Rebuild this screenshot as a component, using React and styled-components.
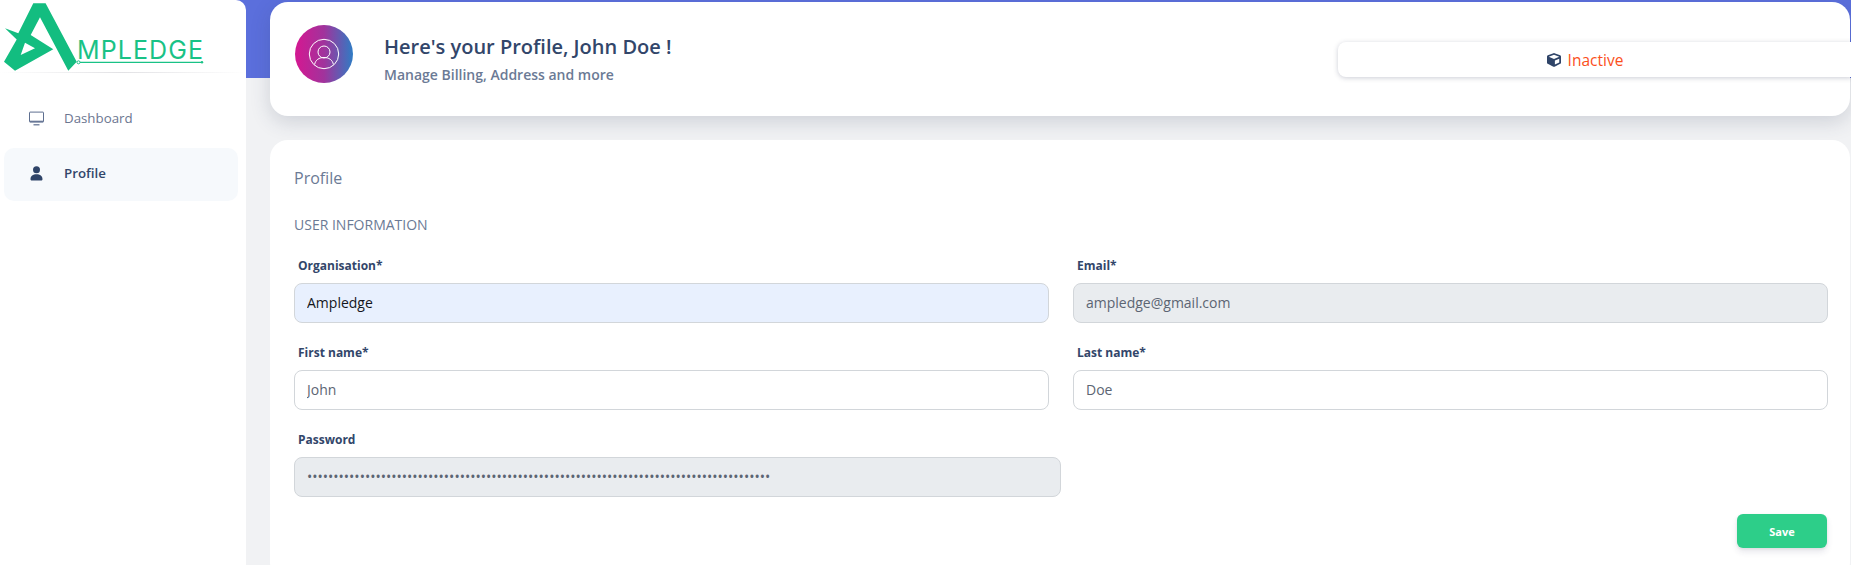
import React from "react";
import styled, { createGlobalStyle } from "styled-components";
import { FaCube } from "react-icons/fa";

const GlobalStyle = createGlobalStyle`
  * {
    box-sizing: border-box;
  }

  html,
  body {
    margin: 0;
    height: 100%;
    overflow: hidden;
    background: #f1f2f4;
    font-family: "Open Sans", "Liberation Sans", sans-serif;
  }
`;

const Logo = () => (
  <LogoSvg viewBox="0 0 205 72" aria-label="Ampledge">
    <path
      fillRule="evenodd"
      fill="#13bd80"
      d="M33.300 3.300H45.600L76.700 61.700 68.300 70.700 40 17.300 30.700 35 53.300 49.300 15 70.700 4 61.700 16.700 39.500 5 28.300 18.300 33.300ZM20.700 55 35 48.300 25 42.700Z"
    />
    <LogoText x="77" y="59" textLength="126" lengthAdjust="spacing">
      MPLEDGE
    </LogoText>
    <path d="M79 62.300H202" stroke="#19c286" strokeWidth="1.200" />
    <circle cx="78.500" cy="62.300" r="1.500" fill="#fff" stroke="#19c286" />
    <circle cx="202" cy="62.300" r="1.200" fill="#19c286" />
  </LogoSvg>
);

const MonitorIcon = () => (
  <NavSvg viewBox="0 0 15 14">
    <path
      d="M1 .6h13a.5.5 0 0 1 .5.5v9a.5.5 0 0 1-.5.5H1a.5.5 0 0 1-.5-.5v-9a.5.5 0 0 1 .5-.5Z"
      fill="none"
      stroke="#5e6f90"
      strokeWidth="1"
    />
    <path d="M1 9.800h13" stroke="#5e6f90" strokeWidth="1.200" />
    <path d="M4.500 13.300h6" stroke="#5e6f90" strokeWidth="1.200" />
  </NavSvg>
);

const UserIcon = () => (
  <NavSvg viewBox="0 0 15 15">
    <circle cx="7.500" cy="3.800" r="3.500" fill="#2f4468" />
    <path
      d="M1.500 13.300c0-3.400 2.400-5 6-5s6 1.600 6 5c0 .9-.6 1.300-1.400 1.300H2.900c-.8 0-1.400-.4-1.400-1.300Z"
      fill="#2f4468"
    />
  </NavSvg>
);

const AvatarIcon = () => (
  <svg width="32" height="32" viewBox="0 0 32 32" fill="none" stroke="#fff" strokeWidth="1">
    <circle cx="16" cy="16" r="14.700" />
    <circle cx="16" cy="14" r="6" />
    <path d="M6.600 26.500c.8-4.500 4.500-7 9.400-7s8.600 2.500 9.400 7" />
  </svg>
);

const App = () => {
  return (
    <>
      <GlobalStyle />
      <Shell>
        <Sidebar>
          <LogoBar>
            <Logo />
          </LogoBar>
          <NavList>
            <NavItem>
              <NavIcon>
                <MonitorIcon />
              </NavIcon>
              Dashboard
            </NavItem>
            <NavItem $active>
              <NavIcon>
                <UserIcon />
              </NavIcon>
              Profile
            </NavItem>
          </NavList>
        </Sidebar>

        <Main>
          <Band />
          <HeaderCard>
            <Avatar>
              <AvatarIcon />
            </Avatar>
            <HeaderText>
              <HeaderTitle>Here's your Profile, John Doe !</HeaderTitle>
              <HeaderSub>Manage Billing, Address and more</HeaderSub>
            </HeaderText>
            <StatusBox>
              <FaCube size={14} color="#2f4468" />
              <StatusText>Inactive</StatusText>
            </StatusBox>
          </HeaderCard>

          <FormCard>
            <CardTitle>Profile</CardTitle>
            <SectionTitle>USER INFORMATION</SectionTitle>
            <FormGrid>
              <Field>
                <FieldLabel>Organisation*</FieldLabel>
                <TextInput $variant="autofill" $strong defaultValue="Ampledge" />
              </Field>
              <Field>
                <FieldLabel>Email*</FieldLabel>
                <TextInput $variant="disabled" readOnly defaultValue="ampledge@gmail.com" />
              </Field>
              <Field>
                <FieldLabel>First name*</FieldLabel>
                <TextInput defaultValue="John" />
              </Field>
              <Field>
                <FieldLabel>Last name*</FieldLabel>
                <TextInput defaultValue="Doe" />
              </Field>
              <PasswordField>
                <FieldLabel>Password</FieldLabel>
                <TextInput
                  $variant="disabled"
                  type="password"
                  readOnly
                  defaultValue={"x".repeat(88)}
                />
              </PasswordField>
            </FormGrid>
            <Actions>
              <SaveButton>Save</SaveButton>
            </Actions>
          </FormCard>
        </Main>
      </Shell>
    </>
  );
};

export default App;

const Shell = styled.div`
  display: flex;
  height: 565px;
  overflow: hidden;
`;

const Sidebar = styled.aside`
  position: relative;
  z-index: 2;
  flex: 0 0 246px;
  background: #fff;
  border-top-right-radius: 10px;
`;

const LogoBar = styled.div`
  height: 73px;
  border-bottom: 1px solid;
  border-image: linear-gradient(90deg, #fff, #e2e2e5 50%, #fff) 1;
`;

const LogoSvg = styled.svg`
  display: block;
  width: 205px;
  height: 72px;
`;

const LogoText = styled.text`
  font-family: "Inter", sans-serif;
  font-size: 25px;
  font-weight: 400;
  fill: #19c286;
`;

const NavList = styled.nav`
  display: flex;
  flex-direction: column;
  gap: 2px;
  padding: 20px 8px 0 4px;
`;

const NavItem = styled.a`
  display: flex;
  align-items: center;
  height: 53px;
  padding-left: 24px;
  padding-bottom: 3px;
  border-radius: 10px;
  font-size: 13.3px;
  font-weight: ${(p) => (p.$active ? 600 : 400)};
  color: ${(p) => (p.$active ? "#32466a" : "#6b7690")};
  background: ${(p) => (p.$active ? "#f6f9fc" : "transparent")};
`;

const NavIcon = styled.span`
  display: flex;
  justify-content: center;
  width: 16px;
  margin-right: 20px;
`;

const NavSvg = styled.svg`
  display: block;
  width: 15px;
  height: 15px;
`;

const Main = styled.main`
  position: relative;
  flex: 1;
  min-width: 0;
  margin-left: -10px;
  padding: 2px 1px 0 34px;
`;

const Band = styled.div`
  position: absolute;
  top: 0;
  left: 0;
  right: 0;
  height: 78px;
  background: #5b6fdc;
`;

const HeaderCard = styled.section`
  position: relative;
  display: flex;
  align-items: flex-start;
  height: 114px;
  padding: 23px 0 0 25px;
  background: #fff;
  border-radius: 18px;
  box-shadow: 0 6px 20px rgba(50, 60, 90, 0.18);
`;

const Avatar = styled.div`
  display: flex;
  align-items: center;
  justify-content: center;
  flex: 0 0 58px;
  height: 58px;
  margin-right: 31px;
  border-radius: 50%;
  background: linear-gradient(90deg, #d01a92 5%, #a1339c 50%, #2f7cc4 100%);
`;

const HeaderText = styled.div`
  flex: 1;
  padding-top: 8px;
`;

const HeaderTitle = styled.h1`
  margin: 0;
  font-size: 20px;
  line-height: 27px;
  font-weight: 600;
  color: #32466a;
`;

const HeaderSub = styled.p`
  margin: 5px 0 0;
  font-size: 14px;
  line-height: 19px;
  font-weight: 600;
  color: #6b7a95;
`;

/* runs past the right edge of the card, as in the original */
const StatusBox = styled.div`
  display: flex;
  align-items: center;
  justify-content: center;
  gap: 7px;
  flex: 0 0 514px;
  height: 35px;
  margin: 17px -2px 0 0;
  padding-right: 20px;
  border-radius: 8px 0 0 8px;
  background: #fff;
  box-shadow: 0 1px 5px rgba(50, 60, 90, 0.25);
`;

const StatusText = styled.span`
  font-size: 15.5px;
  font-weight: 400;
  color: #fb4f1c;
`;

const FormCard = styled.section`
  position: relative;
  margin-top: 24px;
  height: 440px;
  padding: 27px 23px 0 24px;
  background: #fff;
  border-radius: 18px;
`;

const CardTitle = styled.h2`
  margin: 0;
  font-size: 16px;
  line-height: 22px;
  font-weight: 400;
  color: #6b7a95;
`;

const SectionTitle = styled.h6`
  margin: 27px 0 0;
  font-size: 14px;
  line-height: 18px;
  font-weight: 400;
  color: #6b7a95;
`;

const FormGrid = styled.div`
  display: grid;
  grid-template-columns: 755px 755px;
  column-gap: 24px;
  row-gap: 21px;
  margin-top: 23px;
`;

const Field = styled.div`
  display: flex;
  flex-direction: column;
`;

const PasswordField = styled(Field)`
  width: 767px;
`;

const FieldLabel = styled.label`
  padding-left: 4px;
  margin-bottom: 9px;
  font-size: 12px;
  line-height: 17px;
  font-weight: 700;
  color: #32466a;
`;

const inputBackgrounds = {
  autofill: "#e8f0fe",
  disabled: "#e9ecef",
  plain: "#fff",
};

const TextInput = styled.input`
  width: 100%;
  height: 40px;
  padding: 0 12px 2px;
  border: 1px solid #d2d6da;
  border-radius: 8px;
  outline: none;
  font-family: inherit;
  font-size: 14px;
  color: ${(p) => (p.$strong ? "#14161c" : "#5c6573")};
  background: ${(p) => inputBackgrounds[p.$variant || "plain"]};
`;

const Actions = styled.div`
  display: flex;
  justify-content: flex-end;
  margin-top: 17px;
`;

const SaveButton = styled.button`
  width: 90px;
  height: 34px;
  border: 0;
  border-radius: 6px;
  font-family: inherit;
  font-size: 11px;
  font-weight: 700;
  color: #fff;
  background: #2dce89;
  box-shadow: 0 4px 6px rgba(50, 50, 93, 0.11), 0 1px 3px rgba(0, 0, 0, 0.08);
`;
